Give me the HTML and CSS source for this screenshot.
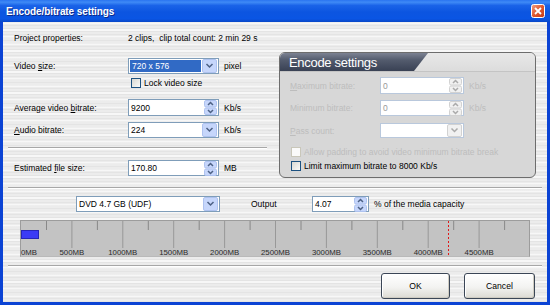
FILE: index.html
```html
<!DOCTYPE html>
<html lang="en">
<head>
    <meta charset="UTF-8">
    <meta name="viewport" content="width=device-width, initial-scale=1.0">
    <title>Encode/bitrate settings</title>
    <link rel="stylesheet" href="styles.css">
</head>
<body>
    <div class="window">
        <div class="titlebar">
            <span class="title">Encode/bitrate settings</span>
            <svg class="close" width="14" height="14" viewBox="0 0 14 14">
                <defs>
                    <linearGradient id="cg" x1="0" y1="0" x2="1" y2="1">
                        <stop offset="0" stop-color="#f0a38a"/>
                        <stop offset="0.5" stop-color="#e0582e"/>
                        <stop offset="1" stop-color="#c23a1a"/>
                    </linearGradient>
                </defs>
                <rect x="0.5" y="0.5" width="13" height="13" rx="2" fill="url(#cg)" stroke="#fff"/>
                <path d="M4 4 L10 10 M10 4 L4 10" stroke="#fff" stroke-width="1.8"/>
            </svg>
        </div>

        <div class="client">
            <div class="row proj">
                <span class="label">Project properties:</span>
                <span>2 clips,&nbsp; clip total count: 2 min 29 s</span>
            </div>

            <div class="main">
                <div class="left">
                    <div class="row r-video">
                        <span class="label">Video <u>s</u>ize:</span>
                        <div class="ctl">
                            <span class="val sel">720 x 576</span>
                            <svg class="dd" width="15" height="14" viewBox="0 0 15 14"><rect x="0.5" y="0.5" width="14" height="13" rx="1.5"/><path d="M4.5 5 L7.5 8 L10.5 5"/></svg>
                        </div>
                        <span class="unit">pixel</span>
                    </div>
                    <div class="row r-lock">
                        <span class="cb"></span>
                        <span>Lock video size</span>
                    </div>
                    <div class="row r-avg">
                        <span class="label">Average video <u>b</u>itrate:</span>
                        <div class="ctl">
                            <span class="val">9200</span>
                            <svg class="spin" width="13" height="15" viewBox="0 0 13 15"><rect x="0.5" y="0.5" width="12" height="6.5" rx="1.5"/><rect x="0.5" y="8" width="12" height="6.5" rx="1.5"/><path d="M4 5 L6.5 2.5 L9 5 M4 10 L6.5 12.5 L9 10"/></svg>
                        </div>
                        <span class="unit">Kb/s</span>
                    </div>
                    <div class="row r-audio">
                        <span class="label"><u>A</u>udio bitrate:</span>
                        <div class="ctl">
                            <span class="val">224</span>
                            <svg class="dd" width="15" height="14" viewBox="0 0 15 14"><rect x="0.5" y="0.5" width="14" height="13" rx="1.5"/><path d="M4.5 5 L7.5 8 L10.5 5"/></svg>
                        </div>
                        <span class="unit">Kb/s</span>
                    </div>
                    <div class="sep sep-left"></div>
                    <div class="row r-est">
                        <span class="label">Estimated <u>f</u>ile size:</span>
                        <div class="ctl">
                            <span class="val">170.80</span>
                            <svg class="spin" width="13" height="15" viewBox="0 0 13 15"><rect x="0.5" y="0.5" width="12" height="6.5" rx="1.5"/><rect x="0.5" y="8" width="12" height="6.5" rx="1.5"/><path d="M4 5 L6.5 2.5 L9 5 M4 10 L6.5 12.5 L9 10"/></svg>
                        </div>
                        <span class="unit">MB</span>
                    </div>
                </div>

                <div class="panel">
                    <div class="panel-head">
                        <span class="tab">Encode settings</span>
                    </div>
                    <div class="prow p1">
                        <span class="plabel"><u>M</u>aximum bitrate:</span>
                        <div class="ctl off">
                            <span class="val">0</span>
                            <svg class="spin" width="13" height="15" viewBox="0 0 13 15"><rect x="0.5" y="0.5" width="12" height="6.5" rx="1.5"/><rect x="0.5" y="8" width="12" height="6.5" rx="1.5"/><path d="M4 5 L6.5 2.5 L9 5 M4 10 L6.5 12.5 L9 10"/></svg>
                        </div>
                        <span class="unit dim">Kb/s</span>
                    </div>
                    <div class="prow p2">
                        <span class="plabel">Minimum bitrate:</span>
                        <div class="ctl off">
                            <span class="val">0</span>
                            <svg class="spin" width="13" height="15" viewBox="0 0 13 15"><rect x="0.5" y="0.5" width="12" height="6.5" rx="1.5"/><rect x="0.5" y="8" width="12" height="6.5" rx="1.5"/><path d="M4 5 L6.5 2.5 L9 5 M4 10 L6.5 12.5 L9 10"/></svg>
                        </div>
                        <span class="unit dim">Kb/s</span>
                    </div>
                    <div class="prow p3">
                        <span class="plabel"><u>P</u>ass count:</span>
                        <div class="ctl off">
                            <span class="val"></span>
                            <svg class="dd" width="15" height="13" viewBox="0 0 15 13"><rect x="0.5" y="0.5" width="14" height="12" rx="1.5"/><path d="M4.5 4.5 L7.5 7.5 L10.5 4.5"/></svg>
                        </div>
                    </div>
                    <div class="prow p4">
                        <span class="cb cb-off"></span>
                        <span class="dim">Allow padding to avoid video minimum bitrate break</span>
                    </div>
                    <div class="prow p5">
                        <span class="cb"></span>
                        <span>Limit maximum bitrate to 8000 Kb/s</span>
                    </div>
                </div>
            </div>

            <div class="sep sep-full"></div>

            <div class="row media">
                <div class="ctl combo-media">
                    <span class="val">DVD 4.7 GB (UDF)</span>
                    <svg class="dd" width="15" height="14" viewBox="0 0 15 14"><rect x="0.5" y="0.5" width="14" height="13" rx="1.5"/><path d="M4.5 5 L7.5 8 L10.5 5"/></svg>
                </div>
                <span class="out">Output</span>
                <div class="ctl ctl-pct">
                    <span class="val">4.07</span>
                    <svg class="spin" width="13" height="15" viewBox="0 0 13 15"><rect x="0.5" y="0.5" width="12" height="6.5" rx="1.5"/><rect x="0.5" y="8" width="12" height="6.5" rx="1.5"/><path d="M4 5 L6.5 2.5 L9 5 M4 10 L6.5 12.5 L9 10"/></svg>
                </div>
                <span class="unit">% of the media capacity</span>
            </div>

            <div class="ruler">
                <svg width="508" height="35" viewBox="0 0 508 35">
                    <g class="major">
                        <line x1="50.9" y1="0" x2="50.9" y2="27"/>
                        <line x1="101.8" y1="0" x2="101.8" y2="27"/>
                        <line x1="152.7" y1="0" x2="152.7" y2="27"/>
                        <line x1="203.6" y1="0" x2="203.6" y2="27"/>
                        <line x1="254.5" y1="0" x2="254.5" y2="27"/>
                        <line x1="305.4" y1="0" x2="305.4" y2="27"/>
                        <line x1="356.3" y1="0" x2="356.3" y2="27"/>
                        <line x1="407.2" y1="0" x2="407.2" y2="27"/>
                        <line x1="458.1" y1="0" x2="458.1" y2="27"/>
                    </g>
                    <g class="minor">
                        <line x1="25.5" y1="0" x2="25.5" y2="9"/>
                        <line x1="76.4" y1="0" x2="76.4" y2="9"/>
                        <line x1="127.3" y1="0" x2="127.3" y2="9"/>
                        <line x1="178.2" y1="0" x2="178.2" y2="9"/>
                        <line x1="229.1" y1="0" x2="229.1" y2="9"/>
                        <line x1="280" y1="0" x2="280" y2="9"/>
                        <line x1="330.9" y1="0" x2="330.9" y2="9"/>
                        <line x1="381.8" y1="0" x2="381.8" y2="9"/>
                        <line x1="432.7" y1="0" x2="432.7" y2="9"/>
                        <line x1="483.6" y1="0" x2="483.6" y2="9"/>
                    </g>
                    <rect class="used" x="0.5" y="9.5" width="17" height="8"/>
                    <line class="limit" x1="427.5" y1="0" x2="427.5" y2="35"/>
                    <g class="rl">
                        <text x="0" y="34">0MB</text>
                        <text x="50.9" y="34" text-anchor="middle">500MB</text>
                        <text x="101.8" y="34" text-anchor="middle">1000MB</text>
                        <text x="152.7" y="34" text-anchor="middle">1500MB</text>
                        <text x="203.6" y="34" text-anchor="middle">2000MB</text>
                        <text x="254.5" y="34" text-anchor="middle">2500MB</text>
                        <text x="305.4" y="34" text-anchor="middle">3000MB</text>
                        <text x="356.3" y="34" text-anchor="middle">3500MB</text>
                        <text x="407.2" y="34" text-anchor="middle">4000MB</text>
                        <text x="458.1" y="34" text-anchor="middle">4500MB</text>
                    </g>
                </svg>
            </div>

            <div class="sep sep-full sep-bottom"></div>

            <div class="btns">
                <button class="btn btn-ok">OK</button>
                <button class="btn btn-cancel">Cancel</button>
            </div>
        </div>
    </div>
</body>
</html>
```

FILE: styles.css
```css
* { box-sizing: border-box; }
body { margin: 0; font-family: "Liberation Sans", Arial, sans-serif; font-size: 8.5px; color: #000; }

.window { width: 550px; height: 305px; background: #0b43d4; display: flex; flex-direction: column; }

/* title bar */
.titlebar {
    height: 22px;
    display: flex;
    align-items: center;
    justify-content: space-between;
    padding: 0 5px 0 6px;
    background: linear-gradient(#2a74f0 0%, #3f8af6 10%, #1a63e8 25%, #0c55e0 55%, #0a55e4 85%, #0947c8 100%);
}
.title { color: #fff; font-weight: bold; font-size: 10px; letter-spacing: -0.1px; text-shadow: 1px 1px #0b2a8a; }
.close { display: block; }

/* dialog client area, brushed metal */
.client {
    margin: 0 3px;
    height: 280px;
    display: flex;
    flex-direction: column;
    background:
        repeating-linear-gradient(180deg, rgba(0,0,0,0.035) 0 1px, transparent 1px 3px),
        repeating-linear-gradient(180deg, rgba(255,255,255,0.6) 0 2px, transparent 2px 7px),
        #ececec;
}

.row { display: flex; align-items: center; }
.label { width: 114px; flex: none; }
.unit { margin-left: 5px; }
.dim { color: #bdbdbd; }

.proj { margin-top: 8px; height: 16px; padding-left: 11px; }

.main { display: flex; gap: 12px; margin-top: 6px; }
.left { width: 264px; flex: none; padding-left: 11px; display: flex; flex-direction: column; }

.r-video { margin-top: 6px; height: 16px; }
.r-lock { margin-top: 3px; height: 11px; padding-left: 117px; }
.r-avg { margin-top: 11px; height: 17px; }
.r-audio { margin-top: 6px; height: 16px; }
.r-est { margin-top: 11px; height: 16px; }

/* etched separators */
.sep { height: 2px; border-top: 1px solid #a7a7a7; border-bottom: 1px solid #fff; }
.sep-left { margin: 9px 0 0 -6px; width: 259px; }
.sep-full { margin: 9px 5px 0 5px; }
.sep-bottom { margin-top: 8px; }

/* edit / combo controls */
.ctl {
    width: 91px;
    height: 100%;
    flex: none;
    display: flex;
    align-items: center;
    border: 1px solid #7f9db9;
    background: #fff;
    padding-right: 1px;
}
.ctl .val { flex: 1; padding-left: 2px; white-space: nowrap; }
.ctl .sel { background: #316ac5; color: #fff; height: 12px; line-height: 12px; margin: 0 1px 0 1px; }
.dd, .spin { display: block; flex: none; }
.dd rect, .spin rect { fill: #c6d6fb; stroke: #aec2ef; }
.dd path, .spin path { fill: none; stroke: #4d6185; stroke-width: 1.5; }

.ctl.off { border-color: #b9c8dc; }
.ctl.off .val { color: #999; }
.ctl.off .dd rect, .ctl.off .spin rect { fill: #f1f1f1; stroke: #d2d2d2; }
.ctl.off .dd path, .ctl.off .spin path { stroke: #aaaaaa; }

/* checkboxes */
.cb {
    width: 10px;
    height: 10px;
    flex: none;
    margin-right: 3px;
    border: 1px solid #1c5180;
    background: linear-gradient(135deg, #d8d8d2, #fbfbf9);
}
.cb-off { border-color: #c9c7ba; background: #fafafa; }

/* encode settings group */
.panel {
    width: 257px;
    height: 126px;
    flex: none;
    border: 1px solid #6d6d6d;
    border-radius: 6px;
    overflow: hidden;
    background: #d7d7d7;
    padding-left: 10px;
    display: flex;
    flex-direction: column;
}
.panel-head {
    height: 19px;
    margin-left: -10px;
    background: linear-gradient(#e8e8e8, #dcdcdc);
    border-bottom: 1px solid #c4c4c4;
}
.tab {
    display: block;
    width: 148px;
    height: 100%;
    padding: 2px 0 0 9px;
    color: #fff;
    font-size: 13px;
    letter-spacing: -0.3px;
    background: linear-gradient(#7c8292 0%, #535b6d 40%, #394154 100%);
    clip-path: polygon(0 0, 100% 0, calc(100% - 14px) 100%, 0 100%);
}
.prow { display: flex; align-items: center; }
.plabel { width: 90px; flex: none; color: #bdbdbd; }
.prow .ctl { width: 84px; }
.p1 { margin-top: 5px; height: 17px; }
.p2 { margin-top: 6px; height: 16px; }
.p3 { margin-top: 7px; height: 15px; }
.p4 { margin-top: 9px; height: 10px; padding-left: 1px; }
.p5 { margin-top: 4px; height: 10px; padding-left: 1px; }

/* output row */
.media { margin-top: 7px; height: 16px; padding-left: 73px; }
.combo-media { width: 144px; }
.out { margin-left: 31px; width: 61px; }
.ctl-pct { width: 57px; }

/* capacity ruler */
.ruler {
    margin: 8px 0 0 17px;
    width: 510px;
    height: 37px;
    border: 1px solid #9c9c9c;
    border-bottom-color: #b9b9b9;
    background: #c3c3c3;
}
.ruler svg { display: block; }
.major line { stroke: #989898; stroke-width: 1; }
.minor line { stroke: #888888; stroke-width: 1; }
.used { fill: #3b3bf5; stroke: #2626b8; stroke-width: 1; }
.limit { stroke: #e01818; stroke-width: 1; stroke-dasharray: 2 2; }
.rl text { font-family: "Liberation Sans", Arial, sans-serif; font-size: 7.8px; fill: #2a2a2a; }

/* buttons */
.btns { display: flex; justify-content: flex-end; gap: 14px; margin-top: 6px; padding-right: 12px; }
.btn {
    height: 26px;
    font-family: inherit;
    font-size: 8.6px;
    color: #000;
    border: 1px solid #3b4656;
    border-radius: 3px;
    background: linear-gradient(#ffffff, #f3f3f1 55%, #dcdad3);
    box-shadow: inset -1px -1px 0 #cfccc2, inset 1px 1px 0 #fff;
    padding: 0;
}
.btn-ok { width: 69px; }
.btn-cancel { width: 71px; }
```
